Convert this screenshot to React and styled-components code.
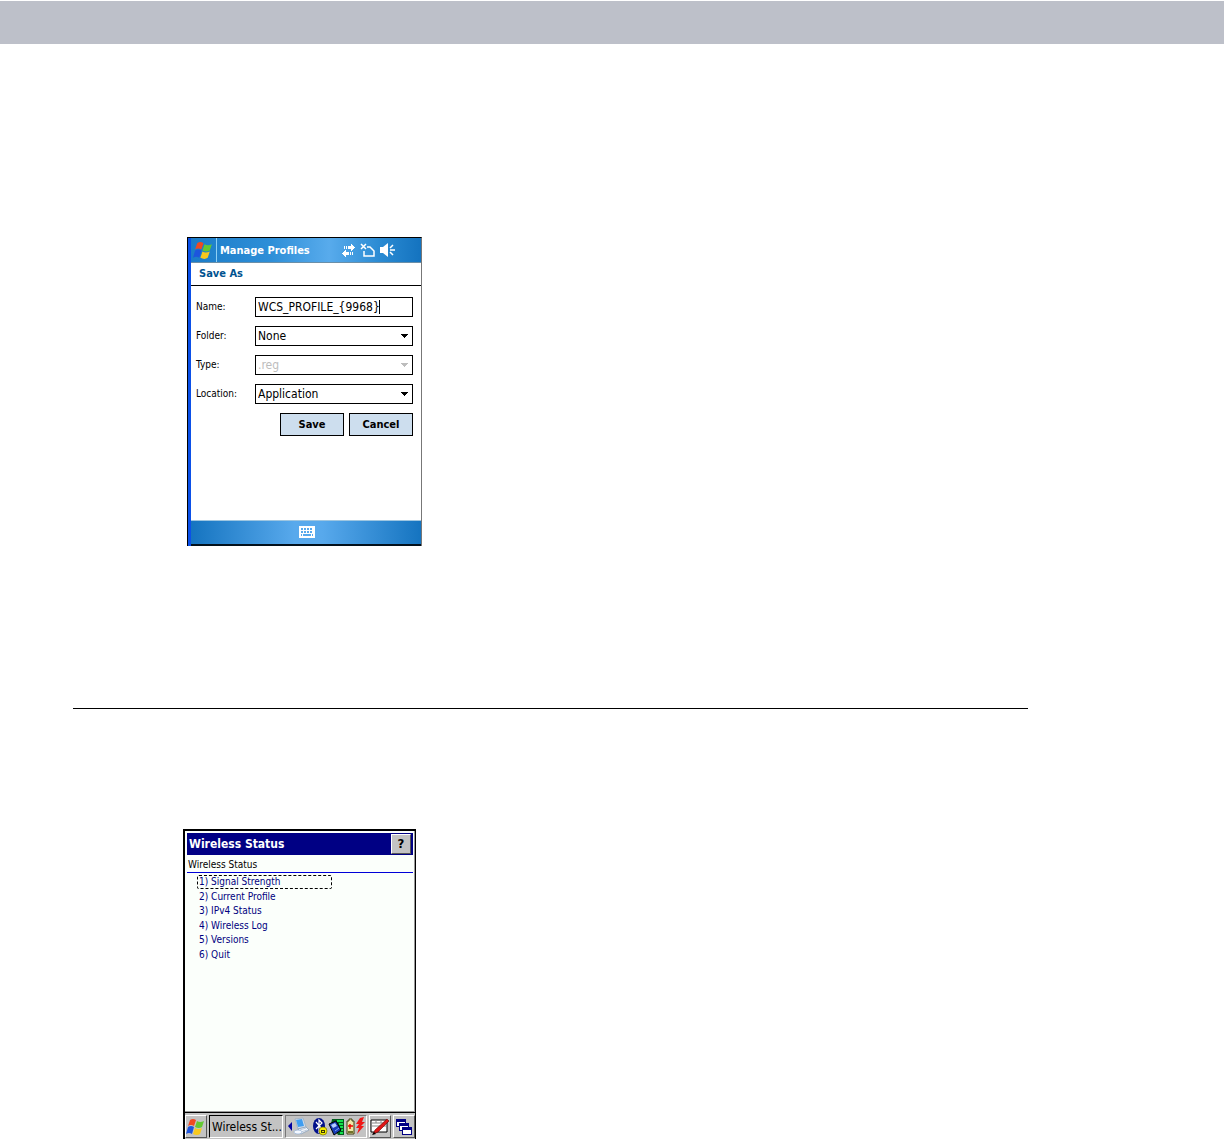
import styled, { createGlobalStyle } from "styled-components";

const GlobalStyle = createGlobalStyle`
  * {
    box-sizing: border-box;
  }
  body {
    margin: 0;
    background: white;
    color: black;
    font-family: "DejaVu Sans Condensed", "DejaVu Sans", sans-serif;
    font-stretch: condensed;
    font-size: 11px;
  }
  button, input, select {
    font: inherit;
    color: inherit;
    margin: 0;
  }
`;

const TopBand = styled.header`
  height: 43px;
  margin-top: 1px;
  background: #bdc0c9;
`;
const Page = styled.main`
  padding: 193px 196px 0 73px;
`;
const Divider = styled.hr`
  height: 1px;
  margin: 162px 0 120px;
  border: 0;
  background: black;
`;

/* Pocket PC screen */
const PocketScreen = styled.section`
  display: flex;
  flex-direction: column;
  width: 235px;
  height: 309px;
  margin-left: 114px;
  border-left: 1px solid black;
  border-top: 1px solid black;
  border-right: 1px solid #777;
  background: white;
`;
const PocketInner = styled.div`
  flex: 1;
  display: flex;
  flex-direction: column;
  border-left: 3px solid #0b50e8;
`;
const PocketTitleBar = styled.div`
  display: flex;
  align-items: center;
  height: 25px;
  border-bottom: 1px solid #6b8fa8;
  background: linear-gradient(90deg, #1b7cc8, #2e8fd8 35%, #58abec 60%, #2b8bd3 82%, #1473bf);
  color: white;
`;
const PocketStart = styled.div`
  display: flex;
  align-items: center;
  width: 26px;
  height: 24px;
  padding-left: 2px;
  border-right: 1px solid #8fd0f4;
`;
const PocketTitle = styled.h1`
  flex: 1;
  margin: 0;
  padding-left: 3px;
  font-size: 11px;
  font-weight: bold;
  white-space: nowrap;
`;
const StatusIcons = styled.div`
  display: flex;
  align-items: center;
  gap: 5px;
  padding-right: 25px;
`;
const SubHeader = styled.h2`
  height: 23px;
  margin: 0;
  padding-left: 8px;
  border-bottom: 1px solid black;
  color: #00528f;
  font-size: 11px;
  line-height: 22px;
`;
const Form = styled.form`
  flex: 1;
  display: flex;
  flex-direction: column;
  gap: 9px;
  padding: 11px 8px 0 5px;
`;
const FormRow = styled.div`
  display: flex;
  height: 20px;
`;
const Label = styled.label`
  width: 59px;
  font-size: 10px;
  line-height: 20px;
`;
const Field = styled.div`
  position: relative;
  flex: 1;
  color: ${(props) => (props.$off ? "#bdbdbd" : "black")};
  font-size: 12px;

  svg {
    position: absolute;
    right: 4px;
    top: 8px;
    pointer-events: none;
  }
`;
const TextInput = styled.input`
  width: 100%;
  height: 20px;
  padding: 0 2px;
  border: 1px solid black;
  border-radius: 0;
  background: white;
  outline: 0;
`;
const Caret = styled.span`
  position: absolute;
  right: 33px;
  top: 3px;
  width: 1px;
  height: 14px;
  background: black;
`;
const Select = styled.select`
  appearance: none;
  width: 100%;
  height: 20px;
  padding: 0 2px;
  border: 1px solid black;
  border-radius: 0;
  background: white;
  opacity: 1;
`;
const FormButtons = styled.div`
  display: flex;
  justify-content: flex-end;
  gap: 5px;
`;
const FormButton = styled.button`
  width: 64px;
  height: 23px;
  padding: 0;
  border: 1px solid black;
  border-radius: 0;
  background: #cddeee;
  font-weight: bold;
`;
const PocketFooter = styled.div`
  display: flex;
  justify-content: center;
  align-items: center;
  height: 26px;
  padding: 0 0 2px 2px;
  border-top: 1px solid #9fc6e0;
  border-bottom: 2px solid #03111c;
  background: linear-gradient(90deg, #1574c0, #58a9ec 45%, #58a9ec 57%, #1574c0);
`;

/* Windows CE screen */
const CeScreen = styled.section`
  display: flex;
  flex-direction: column;
  width: 233px;
  height: 310px;
  margin-left: 110px;
  border: solid black;
  border-width: 2px 1px 0 2px;
  background: #fbfffb;
`;
const CeWindow = styled.div`
  flex: 1;
  padding: 2px 1px 2px 2px;
  border-right: 1px solid #999;
  border-bottom: 1px solid #999;
`;
const CeTitleBar = styled.div`
  display: flex;
  justify-content: space-between;
  align-items: center;
  height: 22px;
  padding: 0 2px;
  background: #000084;
  color: white;
`;
const CeTitle = styled.h1`
  margin: 0;
  font-size: 12px;
  font-weight: bold;
`;
const HelpButton = styled.button`
  width: 20px;
  height: 20px;
  padding: 0;
  border: 1px solid;
  border-color: white #555 #555 white;
  background: #c3c3c3;
  color: black;
  font-size: 13px;
  font-weight: bold;
  line-height: 16px;
`;
const CeHeading = styled.h2`
  height: 18px;
  margin: 0;
  padding-left: 1px;
  border-bottom: 1px solid #0000d8;
  font-size: 10px;
  font-weight: normal;
  line-height: 19px;
`;
const Menu = styled.ul`
  display: grid;
  grid-auto-rows: 1fr;
  height: 87px;
  margin: 2px 0 0;
  padding: 0 0 0 10px;
  list-style: none;
`;
const MenuItem = styled.li`
  display: flex;
  align-items: center;
`;
const MenuLink = styled.a`
  width: 135px;
  height: 14px;
  padding-left: 1px;
  border: 1px ${(props) => (props.$focused ? "dashed black" : "solid transparent")};
  border-radius: 2px;
  color: #000080;
  font-size: 10px;
  line-height: 12px;
  text-decoration: none;
  white-space: nowrap;
`;
const Taskbar = styled.footer`
  display: flex;
  gap: 2px;
  height: 27px;
  padding: 2px 0 1px;
  border-top: 1px solid black;
  background: #c3c3c3;
`;
const TaskButton = styled.button`
  display: flex;
  justify-content: center;
  align-items: center;
  width: 22px;
  padding: 0;
  border: 1px solid;
  border-color: white #555 #555 white;
  background: #c3c3c3;
`;
const ActiveTask = styled.button`
  flex: 1;
  padding: 0 0 0 2px;
  border: 1px solid;
  border-color: black white white black;
  background: #c3c3c3;
  font-size: 12px;
  text-align: left;
  white-space: nowrap;
  overflow: hidden;
`;
const Tray = styled.div`
  display: flex;
  align-items: center;
  width: 82px;
  border: 1px solid;
  border-color: #777 white white #777;
  padding-left: 1px;
`;

const Flag = ({ size }) => (
  <svg width={size} height={size} viewBox="0 0 20 20" aria-hidden="true">
    <path d="M4 3q3-2 6 0L8 9q-3-2-6 0z" fill="#f04a22" />
    <path d="M11 4q3 2 7 0l-2 6q-3 2-7 0z" fill="#64c832" />
    <path d="M2 10q3-2 6 0l-2 7q-3-2-6 0z" fill="#1d55dd" />
    <path d="M9 11q3 2 7 0l-2 6q-3 2-7 0z" fill="#f8c91e" />
  </svg>
);

const Arrow = () => (
  <svg width="8" height="4" shapeRendering="crispEdges" aria-hidden="true">
    <path d="M0 0h7v1H6v1H5v1H4v1H3V3H2V2H1V1H0z" fill="currentColor" />
  </svg>
);

const SyncIcon = () => (
  <svg width="13" height="14" viewBox="0 0 13 14" fill="white" shapeRendering="crispEdges" aria-hidden="true">
    <path d="M2 3h1v3H2zM4 3h1v3H4zM6 3h3V1h1v1h1v1h1v1h1v1h-1v1h-1v1h-1v1H9V6H6z" />
    <path d="M11 9h-1v3h1zM9 9H8v3h1zM7 9H4V7H3v1H2v1H1v1H0v1h1v1h1v1h1v1h1v-2h3z" />
  </svg>
);

const NoSignalIcon = () => (
  <svg width="15" height="14" viewBox="0 0 15 14" fill="none" stroke="white" aria-hidden="true">
    <path d="M1 1l5 5M6 1L1 6" strokeWidth="1.5" />
    <path d="M7 4h3l4 4v5H4V8" strokeWidth="1.5" />
  </svg>
);

const SpeakerIcon = () => (
  <svg width="16" height="14" viewBox="0 0 16 14" aria-hidden="true">
    <path d="M0 4h3l5-4v14l-5-4H0z" fill="white" />
    <path d="M10 5l3-3M10 7h5M10 9l3 3" stroke="white" strokeWidth="1.5" />
  </svg>
);

const KeyboardIcon = () => (
  <svg width="16" height="12" shapeRendering="crispEdges" aria-hidden="true">
    <path d="M0 0h16v12H0z" fill="white" />
    <path d="M2 3h12M2 6h12" stroke="#58a9ec" strokeWidth="2" strokeDasharray="2 1" />
    <path d="M2 9h1M4 9h8M13 9h1" stroke="#58a9ec" strokeWidth="2" />
  </svg>
);

const TrayIcons = () => (
  <svg width="79" height="20" viewBox="0 0 79 20" aria-hidden="true">
    <path d="M5 5v9L1 9z" fill="#0000a0" />
    {/* network computer */}
    <path d="M8 2l8-1 3 9-8 2z" fill="#d2dce8" stroke="#8aa4be" strokeWidth="0.6" />
    <path d="M9 3l6-1 2 7-6 1z" fill="#3f9df0" />
    <path d="M11 12l8-2 3 3-8 4z" fill="#f2f5fa" stroke="#7c96b4" strokeWidth="0.7" />
    <path d="M13 13l6-2M14 15l6-2" stroke="#9eb0c8" strokeWidth="0.6" />
    <ellipse cx="11" cy="15" rx="4" ry="2" fill="#f4f8ff" stroke="#86a8d0" strokeWidth="0.6" />
    {/* bluetooth */}
    <ellipse cx="32" cy="9" rx="6" ry="8" fill="#00108a" />
    <path d="M29 5l6 7-3 3V3l3 3-6 6" fill="none" stroke="white" strokeWidth="1.2" />
    <circle cx="36" cy="14" r="4" fill="#f5ed00" stroke="#777300" strokeWidth="0.7" />
    <path d="M34 13h4v3h-4z" fill="#3a3800" />
    <path d="M35 14h2v1h-2z" fill="#f5ed00" />
    {/* wireless card */}
    <path d="M45 2h12v16h-6L44 7z" fill="#005c1c" />
    <path d="M50 4h6M52 7h4M53 10h3M54 13h2M53 16h3" stroke="#14e04d" strokeWidth="2" />
    <path d="M42 7l7-3 5 9-7 5z" fill="#173bb5" stroke="black" />
    <path d="M44 8l4-2 2 3-4 2z" fill="#b4ccff" />
    <path d="M48 14l4-3" stroke="#7ca0ff" />
    {/* battery */}
    <path d="M62 2h3v2h2v13h-7V4h2z" fill="#efe8a8" stroke="#403c10" />
    <path d="M61 14h5v2h-5z" fill="#70732a" />
    <path d="M61 9h5M63 7v5" stroke="#f00000" strokeWidth="1.4" />
    <path d="M73 1l4-1-2 5h3l-4 4h3l-7 8 2-6h-3l3-4h-3z" fill="#f01818" />
  </svg>
);

const PenIcon = () => (
  <svg width="20" height="18" viewBox="0 0 20 18" aria-hidden="true">
    <path d="M1 2h16v12H1z" fill="white" stroke="black" />
    <path d="M2 5h14M6 2v3M11 2v3M2 8h14" stroke="#888" />
    <path d="M17 1l2 2L8 14l-5 2 2-4z" fill="#df1717" stroke="#600" strokeWidth="0.6" />
    <path d="M2 17l2-3 2 2z" fill="black" />
  </svg>
);

const WindowsIcon = () => (
  <svg width="16" height="16" shapeRendering="crispEdges" aria-hidden="true">
    {[0, 3, 6].map((n) => (
      <g key={n} transform={`translate(${n} ${n + n / 3})`}>
        <path d="M0 0h10v8H0z" fill="#000084" />
        <path d="M1 3h8v4H1z" fill="white" />
      </g>
    ))}
  </svg>
);

const selects = [
  { id: "folder", label: "Folder:", value: "None" },
  { id: "type", label: "Type:", value: ".reg", disabled: true },
  { id: "location", label: "Location:", value: "Application" },
];

const menu = [
  "Signal Strength",
  "Current Profile",
  "IPv4 Status",
  "Wireless Log",
  "Versions",
  "Quit",
];

const ManageProfiles = () => (
  <PocketScreen>
    <PocketInner>
      <PocketTitleBar>
        <PocketStart>
          <Flag size={21} />
        </PocketStart>
        <PocketTitle>Manage Profiles</PocketTitle>
        <StatusIcons>
          <SyncIcon />
          <NoSignalIcon />
          <SpeakerIcon />
        </StatusIcons>
      </PocketTitleBar>
      <SubHeader>Save As</SubHeader>
      <Form>
        <FormRow>
          <Label htmlFor="name">Name:</Label>
          <Field>
            <TextInput id="name" defaultValue="WCS_PROFILE_{9968}" spellCheck={false} />
            <Caret />
          </Field>
        </FormRow>
        {selects.map((item) => (
          <FormRow key={item.id}>
            <Label htmlFor={item.id}>{item.label}</Label>
            <Field $off={item.disabled}>
              <Select id={item.id} disabled={item.disabled}>
                <option>{item.value}</option>
              </Select>
              <Arrow />
            </Field>
          </FormRow>
        ))}
        <FormButtons>
          <FormButton type="button">Save</FormButton>
          <FormButton type="button">Cancel</FormButton>
        </FormButtons>
      </Form>
      <PocketFooter>
        <KeyboardIcon />
      </PocketFooter>
    </PocketInner>
  </PocketScreen>
);

const WirelessStatus = () => (
  <CeScreen>
    <CeWindow>
      <CeTitleBar>
        <CeTitle>Wireless Status</CeTitle>
        <HelpButton>?</HelpButton>
      </CeTitleBar>
      <CeHeading>Wireless Status</CeHeading>
      <Menu>
        {menu.map((item, i) => (
          <MenuItem key={item}>
            <MenuLink href="#" $focused={i === 0}>
              {i + 1}) {item}
            </MenuLink>
          </MenuItem>
        ))}
      </Menu>
    </CeWindow>
    <Taskbar>
      <TaskButton aria-label="Start">
        <Flag size={20} />
      </TaskButton>
      <ActiveTask>Wireless St...</ActiveTask>
      <Tray>
        <TrayIcons />
      </Tray>
      <TaskButton aria-label="Input panel">
        <PenIcon />
      </TaskButton>
      <TaskButton aria-label="Desktop">
        <WindowsIcon />
      </TaskButton>
    </Taskbar>
  </CeScreen>
);

const App = () => (
  <>
    <GlobalStyle />
    <TopBand />
    <Page>
      <ManageProfiles />
      <Divider />
      <WirelessStatus />
    </Page>
  </>
);

export default App;
